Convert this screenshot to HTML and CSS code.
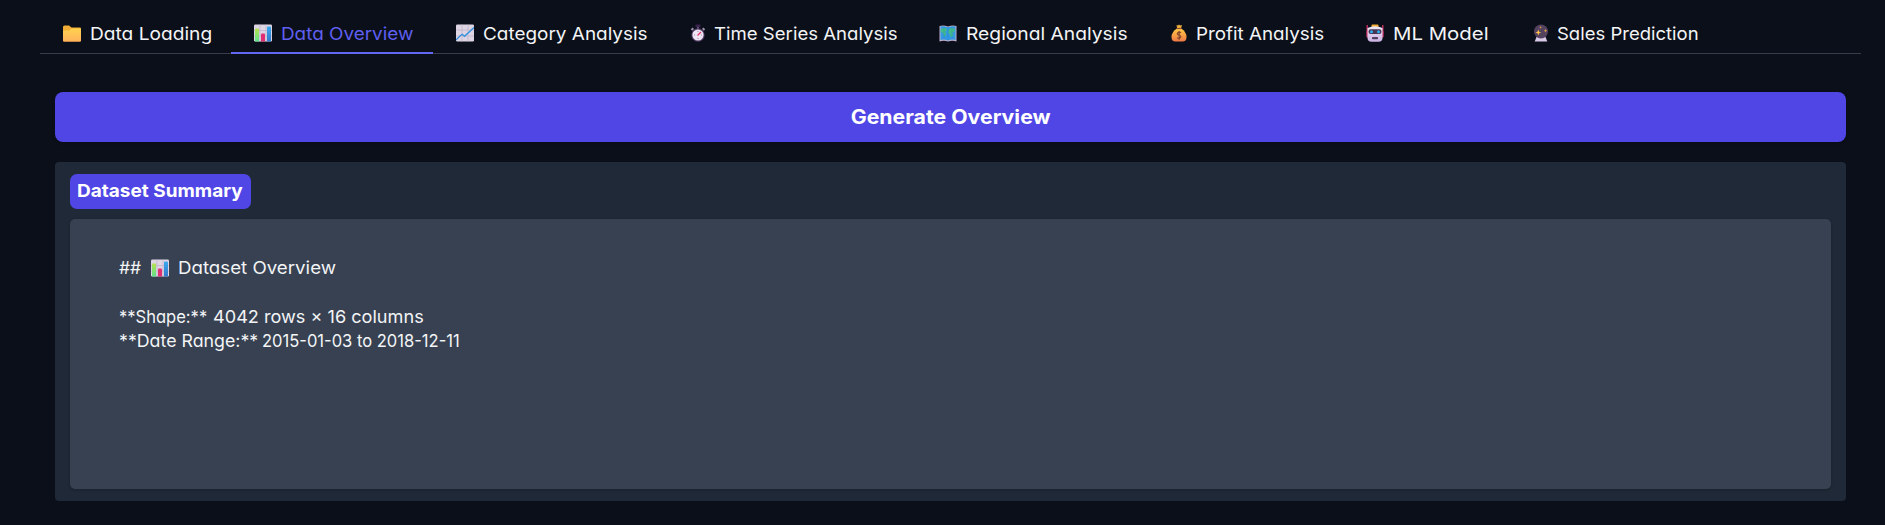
FILE: index.html
```html
<!DOCTYPE html>
<html lang="en">
<head>
<meta charset="utf-8">
<title>Data Overview</title>
<link rel="stylesheet" href="styles.css">
</head>
<body>
<svg class="defs" aria-hidden="true">
  <defs>
    <linearGradient id="gold" x2="0" y2="1"><stop stop-color="#ffd34e"/><stop offset="1" stop-color="#ffb25c"/></linearGradient>
    <linearGradient id="bag" x2="0" y2="1"><stop stop-color="#ffc943"/><stop offset="1" stop-color="#ee7846"/></linearGradient>
    <linearGradient id="green" x2="0" y2="1"><stop stop-color="#b5e04d"/><stop offset="1" stop-color="#5fe08c"/></linearGradient>
    <linearGradient id="blue" x2="0" y2="1"><stop stop-color="#38a9ee"/><stop offset="1" stop-color="#3478ce"/></linearGradient>
    <linearGradient id="bot" x2="0" y2="1"><stop stop-color="#efe8f5"/><stop offset="1" stop-color="#cbb2e3"/></linearGradient>
    <symbol id="chart" viewBox="0 0 18 18">
      <rect y=".5" width="18" height="17" rx="1.2" fill="#ddd5e4"/>
      <path d="M0 6.5h18M0 12h18M6 .5v17M12 .5v17" stroke="#bcb1c8" stroke-width=".7"/>
      <path d="M1 5.5q0-1 1-1h2q1 0 1 1v12H1z" fill="url(#green)"/>
      <path d="M7 10.5q0-1 1-1h2q1 0 1 1v7H7z" fill="#df2f72"/>
      <path d="M13 3.5q0-1 1-1h2q1 0 1 1v14h-4z" fill="url(#blue)"/>
    </symbol>
  </defs>
</svg>
<nav class="tabs">
  <div class="tab t1"><svg class="icon" viewBox="0 0 18 18"><path d="M0 3q0-1.5 1.500-1.500h4.500l2.500 2H17q1 0 1 1v12q0 1-1 1H1q-1 0-1-1z" fill="#f0ac36"/><path d="M0 6.500h6.500l2-2H17q1 0 1 1v11q0 1-1 1H1q-1 0-1-1z" fill="url(#gold)"/></svg><span>Data Loading</span></div>
  <div class="tab t2 active"><svg class="icon"><use href="#chart"/></svg><span>Data Overview</span></div>
  <div class="tab t3"><svg class="icon" viewBox="0 0 18 18"><rect y=".5" width="18" height="17" rx="1.200" fill="#ddd5e4"/><path d="M0 6h18M0 12h18M6 .5v17M12 .5v17" stroke="#bcb1c8" stroke-width=".7"/><path d="M0 16l4.500-4.500 1.700-1.200 2.300 2L18 3.500" fill="none" stroke="#3490df" stroke-width="1.300"/></svg><span>Category Analysis</span></div>
  <div class="tab t4"><svg class="icon" viewBox="0 0 18 18"><rect x="6.500" y=".5" width="5" height="2.500" rx=".7" fill="#3c2350"/><path d="M9 3v2" stroke="#66507c" stroke-width="2"/><path d="M2.500 6l1.800-1.800M15.500 6l-1.800-1.800" stroke="#a092ad" stroke-width="2"/><circle cx="9" cy="11" r="6.700" fill="#503b63"/><circle cx="9" cy="11" r="5.600" fill="#eee4f4"/><path d="M9 7v1M9 14v1M5 11h1M12 11h1" stroke="#8b7a98" stroke-width=".8"/><path d="M8.500 11.500L12 8" stroke="#e23464" stroke-width="1.300"/></svg><span>Time Series Analysis</span></div>
  <div class="tab t5"><svg class="icon" viewBox="0 0 18 18"><path d="M.5 2q4.250-1 8.500.5Q13.250 1 17.500 2v15.500q-4.250-1.500-8.500 0-4.250-1.500-8.500 0z" fill="#bdb0cc"/><path d="M1.500 2.500Q5 2 9 3.300 13 2 16.500 2.500V16q-3.500-1-7.500.5Q5 15 1.500 16z" fill="#3399e2"/><path d="M2 5l4-1 2 2-2 2 1 2-1.500 2.500-1-3-2.500-2zM10 5.500l2.500-1.500 3 1-.5 3-2 .5 1 2.500-2 2-1-3-1.500-1zM14 12l2 1" fill="#43bb8c" stroke="#43bb8c" stroke-width=".5"/><path d="M5 2.500v13M9 3v13M13 2.500v13" stroke="#1b69b0" stroke-width=".5" opacity=".4"/></svg><span>Regional Analysis</span></div>
  <div class="tab t6"><svg class="icon" viewBox="0 0 18 18"><path d="M6.500 1l1.500.5L9 .5l1.200 1L12 1l-1 3.500H7.200z" fill="#ecae3c"/><path d="M7 4.500h4.200q5.300 3.500 5.300 8.500 0 4.500-4 4.500H5.500q-4 0-4-4.500 0-5 5.500-8.500z" fill="url(#bag)"/><path d="M6.500 4.500h5" stroke="#8c4931" stroke-width="1.100"/><path d="M11 8.800Q9 7.500 7.700 8.800c-1.200 1.600.5 2 1.600 2.400 1.600.6 2 1.700.8 2.700-1 .8-2.200.4-3-.3M9.200 7v8.700" fill="none" stroke="#84472f" stroke-width="1.200"/></svg><span>Profit Analysis</span></div>
  <div class="tab t7"><svg class="icon" viewBox="0 0 18 18"><path d="M1.200 1v8M16.800 1v8" stroke="#d42f65" stroke-width="1.300"/><rect x=".3" y="7" width="17.400" height="6.500" rx="1" fill="#c32e66"/><rect x="5.500" y=".5" width="7" height="3" rx="1" fill="#f2ae32"/><path d="M1.500 4Q9 .5 16.500 4v10q0 3.700-4 3.700h-7q-4 0-4-3.700z" fill="url(#bot)"/><rect x="2.500" y="5.300" width="13" height="4.700" rx="2.200" fill="#473753"/><circle cx="5.500" cy="7.700" r="1.500" fill="#2daef0"/><circle cx="12.500" cy="7.700" r="1.500" fill="#2daef0"/><rect x="6" y="13" width="6" height="2.200" rx=".8" fill="#514061"/></svg><span>ML Model</span></div>
  <div class="tab t8"><svg class="icon" viewBox="0 0 18 18"><path d="M4.500 13h9l1.800 4.500H2.700z" fill="#d9c9e8"/><circle cx="9" cy="7.500" r="7" fill="#54435f"/><path d="M6.300 5.500l.8 2.200 2.200.8-2.200.8-.8 2.200-.8-2.200-2.200-.8 2.200-.8z" fill="#ffbf4c"/><path d="M8.500 2l.4 1 .9.400-.9.400-.4 1-.4-1-.9-.4.900-.4zM13.500 5l.5 1.200 1.200.5-1.200.5-.5 1.200-.5-1.200-1.200-.5 1.200-.5z" fill="#e9a647"/></svg><span>Sales Prediction</span></div>
</nav>
<main class="content">
  <button class="generate"><span>Generate Overview</span></button>
  <section class="panel">
    <div class="label"><span>Dataset Summary</span></div>
    <div class="output">
      <p class="line heading"><span class="hash">##</span><svg class="icon"><use href="#chart"/></svg><span class="title">Dataset Overview</span></p>
      <p class="line shape"><span class="key">**Shape:** </span><span class="value">4042 rows × 16 columns</span></p>
      <p class="line range"><span class="key">**Date Range:** </span><span class="value">2015-01-03 to 2018-12-11</span></p>
    </div>
  </section>
</main>
</body>
</html>
```
FILE: styles.css
```css
* { box-sizing: border-box; }
body {
  margin: 0;
  height: 525px;
  overflow: hidden;
  background: #0b0f19;
  color: #f3f4f6;
  font-family: Inter, "Open Sans", sans-serif;
  font-size: 17.5px;
  font-feature-settings: "cv11";
}
.defs { position: absolute; width: 0; height: 0; }
.icon { width: 18px; height: 18px; flex: none; }
.tabs {
  display: flex;
  height: 54px;
  margin: 0 24px 0 40px;
  background: linear-gradient(#3b3b4b, #3b3b4b) bottom / 100% 1px no-repeat;
}
.tab {
  display: flex;
  align-items: center;
  gap: 8.5px;
  flex: none;
  height: 54px;
  padding: 16px 0 3px 23px;
  line-height: 24px;
  white-space: nowrap;
}
.tab span, .line span, .label span { display: inline-block; transform-origin: 0 50%; }
.tab.active { border-bottom: 2px solid #6366f1; padding-bottom: 1px; color: #5f5ff0; }
.tab .icon { margin-top: -1px; }
.t1 { width: 191px; }
.t1 span { transform: scaleX(1.094); }
.t2 { width: 202px; }
.t2 span { transform: scaleX(1.078); }
.t3 { width: 234px; }
.t3 span { transform: scaleX(1.082); }
.t4 { width: 250px; gap: 6.5px; padding-left: 22px; }
.t4 span { transform: scaleX(1.062); }
.t5 { width: 231px; padding-left: 22px; }
.t5 span { transform: scaleX(1.1); }
.t6 { width: 196px; padding-left: 22px; gap: 8px; }
.t6 span { transform: scaleX(1.074); }
.t7 { width: 166px; padding-left: 22px; }
.t7 span { transform: scaleX(1.165); }
.t8 { width: 209px; padding-left: 22px; gap: 7px; }
.t8 span { transform: scaleX(1.057); }
.content {
  display: flex;
  flex-direction: column;
  gap: 20px;
  padding: 38px 39px 0 55px;
}
.generate {
  height: 50px;
  padding: 0;
  border: 0;
  border-radius: 8px;
  background: #4f46e5;
  color: #fff;
  font: 700 19.5px/50px Inter, sans-serif;
  box-shadow: 0 1px 3px rgba(0, 0, 0, .2);
}
.generate span { display: inline-block; transform: scaleX(1.09); }
.panel {
  height: 339px;
  padding: 12px 15px;
  border-radius: 4px;
  background: #1f2937;
}
.label {
  width: 181px;
  height: 35px;
  margin-bottom: 10px;
  padding-left: 7px;
  border-radius: 7px;
  background: #4f46e5;
  color: #fff;
  font-size: 17.8px;
  font-weight: 700;
  font-feature-settings: normal;
  line-height: 34px;
  white-space: nowrap;
}
.label span { transform: scaleX(1.068); }
.output {
  height: 270px;
  padding: 37px 49px;
  border-radius: 5px;
  background: #374151;
  box-shadow: 0 1px 3px rgba(0, 0, 0, .2);
}
.line { display: flex; margin: 0; line-height: 24.3px; white-space: nowrap; }
.heading { align-items: center; margin-bottom: 24.5px; }
.hash { width: 32px; }
.line .title { margin-left: 8.5px; transform: scaleX(1.068); }
.shape .key { width: 94px; transform: scaleX(.945); }
.shape .value { transform: scaleX(1.035); }
.range .key { width: 142.5px; transform: scaleX(1.015); }
.range .value { transform: scaleX(.945); }
```
